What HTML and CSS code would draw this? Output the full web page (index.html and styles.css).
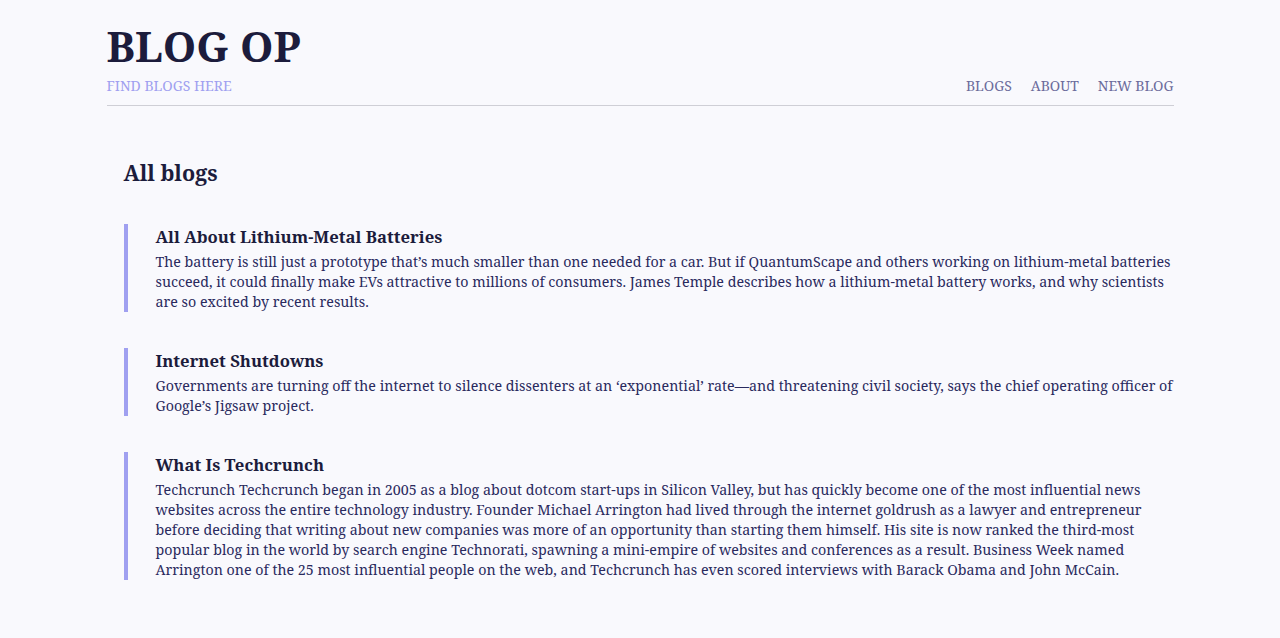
FILE: index.html
```html
<!DOCTYPE html>
<html lang="en">
<head>
<meta charset="utf-8">
<title>Blog OP</title>
<link rel="stylesheet" href="styles.css">
</head>
<body>
<div class="page">
  <header class="site-header">
    <div class="brand">
      <h1 class="logo">BLOG OP</h1>
      <p class="tagline">FIND BLOGS HERE</p>
    </div>
    <nav class="nav">
      <a href="#" class="nav-link">BLOGS</a>
      <a href="#" class="nav-link">ABOUT</a>
      <a href="#" class="nav-link">NEW BLOG</a>
    </nav>
  </header>
  <main class="content">
    <h2 class="section-title">All blogs</h2>
    <article class="post">
      <h3 class="post-title">All About Lithium-Metal Batteries</h3>
      <p class="post-body">The battery is still just a prototype that’s much smaller than one needed for a car. But if QuantumScape and others working on lithium-metal batteries succeed, it could finally make EVs attractive to millions of consumers. James Temple describes how a lithium-metal battery works, and why scientists are so excited by recent results.</p>
    </article>
    <article class="post">
      <h3 class="post-title">Internet Shutdowns</h3>
      <p class="post-body">Governments are turning off the internet to silence dissenters at an ‘exponential’ rate—and threatening civil society, says the chief operating officer of Google’s Jigsaw project.</p>
    </article>
    <article class="post">
      <h3 class="post-title">What Is Techcrunch</h3>
      <p class="post-body">Techcrunch Techcrunch began in 2005 as a blog about dotcom start-ups in Silicon Valley, but has quickly become one of the most influential news websites across the entire technology industry. Founder Michael Arrington had lived through the internet goldrush as a lawyer and entrepreneur before deciding that writing about new companies was more of an opportunity than starting them himself. His site is now ranked the third-most popular blog in the world by search engine Technorati, spawning a mini-empire of websites and conferences as a result. Business Week named Arrington one of the 25 most influential people on the web, and Techcrunch has even scored interviews with Barack Obama and John McCain.</p>
    </article>
  </main>
</div>
</body>
</html>
```

FILE: styles.css
```css
html, body {
  margin: 0;
  padding: 0;
}
body {
  background: #f9f9fd;
  color: #1c1c3c;
  font-family: "Noto Serif", "DejaVu Serif", "Liberation Serif", serif;
}
.page {
  width: 1067px;
  margin: 0 auto;
}
.site-header {
  display: flex;
  justify-content: space-between;
  align-items: flex-end;
  padding-top: 18px;
  padding-bottom: 9px;
  border-bottom: 1px solid #cfcfd6;
}
.logo {
  margin: 0;
  font-size: 42.5px;
  line-height: 56px;
  font-weight: 700;
  color: #1c1c3c;
}
.tagline {
  margin: 2px 0 0;
  font-size: 14px;
  line-height: 20px;
  color: #a0a0f0;
}
.nav {
  display: flex;
  gap: 19px;
}
.nav-link {
  font-size: 14px;
  line-height: 20px;
  color: #6c6c9c;
  text-decoration: none;
}
.content {
  padding: 52px 0 40px 17px;
}
.section-title {
  margin: 0 0 36px;
  font-size: 21.5px;
  line-height: 30px;
  font-weight: 700;
}
.post {
  border-left: 4px solid #a0a0f0;
  padding-left: 28px;
  margin-bottom: 36px;
}
.post-title {
  margin: 0 0 3px;
  font-size: 16.7px;
  line-height: 25px;
  font-weight: 700;
}
.post-body {
  margin: 0;
  font-size: 14.25px;
  line-height: 20px;
  color: #2a2a5e;
}
```
